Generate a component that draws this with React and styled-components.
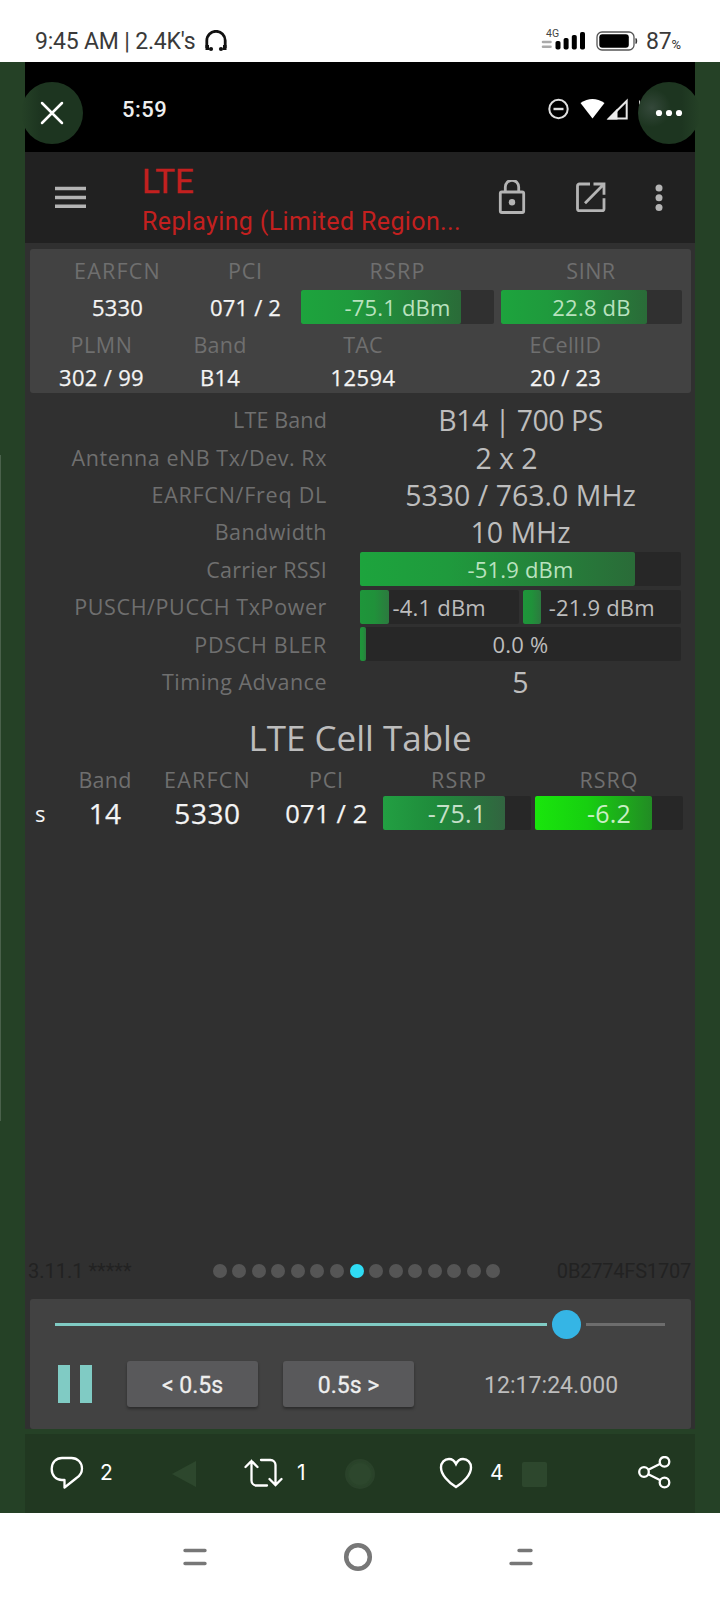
import React from "react";
import styled, { createGlobalStyle } from "styled-components";

const COLORS = {
  frame: "#254126",
  screen: "#303030",
  card: "#424242",
  toolbar: "#212121",
  label: "#6f6f6f",
  value: "#f4f4f4",
  soft: "#bdbdbd",
  icon: "#b4b4b4",
  red: "#c3201f",
  teal: "#80cbc4",
};

const FONTS = {
  ui: '"Roboto", sans-serif',
  data: '"Open Sans", "Noto Sans", sans-serif',
  social: '"Inter", sans-serif',
};

const GREEN = "linear-gradient(90deg, #1da43d 0%, #1f9a3d 32%, #2a6b38 100%)";
const DARK_GREEN = "linear-gradient(90deg, #229f42 0%, #1f8a3b 45%, #326440 100%)";
const BRIGHT = "linear-gradient(90deg, #19e60c 0%, #17cf10 45%, #228b24 100%)";
const SMALL = "linear-gradient(90deg, #1e963a 0%, #20913a 50%, #2c7a3f 100%)";

const DETAILS = [
  { label: "LTE Band", value: "B14 | 700 PS", labelSpacing: 0.15, spacing: -0.5 },
  { label: "Antenna eNB Tx/Dev. Rx", value: "2 x 2", labelSpacing: 0.55, shift: 28, spacing: -0.1 },
  { label: "EARFCN/Freq DL", value: "5330 / 763.0 MHz", labelSpacing: 0.75 },
  { label: "Bandwidth", value: "10 MHz", labelSpacing: 0.45 },
  {
    label: "Carrier RSSI",
    meters: [{ text: "-51.9 dBm", fill: 275, background: GREEN, color: "#b9e2bf" }],
  },
  {
    label: "PUSCH/PUCCH TxPower",
    labelSpacing: 0.6,
    meters: [
      { text: "-4.1 dBm", fill: 29, background: SMALL },
      { text: "-21.9 dBm", fill: 18, background: SMALL },
    ],
  },
  {
    label: "PDSCH BLER",
    labelSpacing: 0.7,
    meters: [{ text: "0.0 %", fill: 6, background: SMALL }],
  },
  { label: "Timing Advance", value: "5", labelSpacing: 0.5 },
];

const DOTS = Array.from({ length: 15 }, (_, index) => index);

function Meter({ text, fill, background, color, size, dark }) {
  return (
    <Track $dark={dark}>
      <Fill style={{ width: fill, background }} />
      <MeterText $color={color} $size={size}>
        {text}
      </MeterText>
    </Track>
  );
}

function PhoneStatus() {
  return (
    <StatusBar>
      <StatusText>9:45 AM | 2.4K's</StatusText>
      <svg width="22" height="22" viewBox="0 0 22 22">
        <path d="M1.800 18V10.500a9.200 9.200 0 0 1 18.400 0V18" fill="none" stroke="#111" strokeWidth="2.800" />
        <path d="M.5 15h3.500v5H.5zM18 15h3.500v5H18z" fill="#111" />
        <circle cx="6" cy="19" r="2.100" fill="#111" />
        <circle cx="16" cy="19" r="2.100" fill="#111" />
      </svg>
      <StatusRight>
        <Network>
          <NetworkName>4G</NetworkName>
          <svg width="11" height="10" viewBox="0 0 11 10">
            <path d="M2 3h7.500M2 7.700h7.500" stroke="#aaa" strokeWidth="2.600" strokeLinecap="round" />
          </svg>
        </Network>
        <svg width="31" height="20" viewBox="0 0 31 20">
          <rect x="0.500" y="10" width="5" height="8.500" rx="1.800" />
          <rect x="8.600" y="7" width="5" height="11.500" rx="1.800" />
          <rect x="16.800" y="4" width="5" height="14.500" rx="1.800" />
          <rect x="25" y="1" width="5" height="17.500" rx="1.800" />
        </svg>
        <BatterySvg width="42" height="20" viewBox="0 0 42 20">
          <rect x="1" y="1" width="37" height="18" rx="5" fill="none" stroke="#555" strokeWidth="1.300" />
          <rect x="3.300" y="3.300" width="29.500" height="13.400" rx="3" />
          <path d="M40 7.500q1.600 2.500 0 5z" stroke="#333" />
        </BatterySvg>
        <StatusText>87</StatusText>
        <Percent>%</Percent>
      </StatusRight>
    </StatusBar>
  );
}

function App() {
  return (
    <Page>
      <GlobalStyle />
      <PhoneStatus />
      <Stage>
        <EdgeLine />
        <CloseButton aria-label="Close">
          <svg width="24" height="24" viewBox="0 0 24 24">
            <path d="M2 2l20 20M22 2L2 22" stroke="#fff" strokeWidth="2.500" strokeLinecap="round" />
          </svg>
        </CloseButton>
        <MoreButton aria-label="More">
          <svg width="28" height="8" viewBox="0 0 28 8" fill="#fff">
            <circle cx="4" cy="4" r="3.100" />
            <circle cx="14" cy="4" r="3.100" />
            <circle cx="24" cy="4" r="3.100" />
          </svg>
        </MoreButton>

        <Screen>
          <InnerStatus>
            <InnerTime>5:59</InnerTime>
            <svg width="94" height="24" viewBox="0 0 94 24">
              <circle cx="11.500" cy="12" r="9.200" fill="none" stroke="#e0e0e0" strokeWidth="2" />
              <path d="M6.500 12h10" stroke="#e0e0e0" strokeWidth="2.400" />
              <path d="M33.500 6Q45.500-2 57.500 6L45.500 21.500z" fill="#fff" />
              <path d="M79.700 4v17.500H62z" fill="none" stroke="#e6e6e6" strokeWidth="2" />
              <path d="M60 22.500L70.500 11.500v11z" fill="#eee" />
              <path d="M92.500 3.500v4" stroke="#ccc" />
            </svg>
          </InnerStatus>

          <Toolbar>
            <svg width="32" height="24" viewBox="0 0 32 24">
              <path d="M0 2.500h31M0 11.500h31M0 20.300h31" stroke={COLORS.icon} strokeWidth="3.600" />
            </svg>
            <Titles>
              <Title>LTE</Title>
              <Subtitle>Replaying (Limited Region...</Subtitle>
            </Titles>
            <svg width="28" height="36" viewBox="0 0 28 36" fill="none" stroke={COLORS.icon}>
              <rect x="2.300" y="12" width="23.400" height="20.500" rx="1.500" strokeWidth="2.800" />
              <path d="M7.300 11.500V7a6.700 6.700 0 0 1 13.400 0v4.500" strokeWidth="2.800" />
              <circle cx="14" cy="22.300" r="3.200" fill={COLORS.icon} stroke="none" />
            </svg>
            <OpenSvg width="32" height="32" viewBox="0 0 32 32" fill="none" stroke={COLORS.icon} strokeWidth="2.800">
              <path d="M15 2H4.500a2 2 0 0 0-2 2v22.700a2 2 0 0 0 2 2H27a2 2 0 0 0 2-2V16.200" />
              <path d="M18.500 2H29v10.700M28.500 2.500L10 21.200" />
            </OpenSvg>
            <MoreSvg width="8" height="28" viewBox="0 0 8 28" fill={COLORS.icon}>
              <circle cx="4" cy="4" r="3.500" />
              <circle cx="4" cy="13.700" r="3.500" />
              <circle cx="4" cy="23.600" r="3.500" />
            </MoreSvg>
          </Toolbar>

          <Summary>
            <ServingRow>
              <Label $spacing={1.2}>EARFCN</Label>
              <Label $spacing={0.8}>PCI</Label>
              <Label $spacing={1.2}>RSRP</Label>
              <SinrLabel $spacing={0.5}>SINR</SinrLabel>
            </ServingRow>
            <ServingRow>
              <Value>5330</Value>
              <Value>071 / 2</Value>
              <Meter text="-75.1 dBm" fill={160} background={GREEN} color="#b9e2bf" dark />
              <MeterGap>
                <Meter text="22.8 dB" fill={146} background={GREEN} color="#b9e2bf" dark />
              </MeterGap>
            </ServingRow>
            <CellRow $height={33}>
              <Label $spacing={0.6}>PLMN</Label>
              <Label>Band</Label>
              <Label>TAC</Label>
              <Label>ECellID</Label>
            </CellRow>
            <CellRow $height={28}>
              <Value $spacing={0.3}>302 / 99</Value>
              <Value>B14</Value>
              <Value $spacing={0.4}>12594</Value>
              <Value>20 / 23</Value>
            </CellRow>
          </Summary>

          <Details>
            {DETAILS.map(({ label, value, labelSpacing, shift, spacing, meters }) => (
              <DetailRow key={label}>
                <DetailLabel $spacing={labelSpacing}>{label}</DetailLabel>
                {meters ? (
                  <Meters>
                    {meters.map((meter) => (
                      <Meter key={meter.text} {...meter} />
                    ))}
                  </Meters>
                ) : (
                  <DetailValue $shift={shift} $spacing={spacing}>
                    {value}
                  </DetailValue>
                )}
              </DetailRow>
            ))}
          </Details>

          <TableTitle>LTE Cell Table</TableTitle>
          <TableRow $height={33}>
            <span />
            <Label>Band</Label>
            <Label $spacing={1.2}>EARFCN</Label>
            <PciLabel $spacing={0.8}>PCI</PciLabel>
            <Label $spacing={1.2}>RSRP</Label>
            <Label $spacing={1}>RSRQ</Label>
          </TableRow>
          <TableRow $height={34}>
            <Serving>s</Serving>
            <TableValue>14</TableValue>
            <TableValue $spacing={0.6}>5330</TableValue>
            <PciValue>071 / 2</PciValue>
            <CellMeter>
              <Meter text="-75.1" fill={122} background={DARK_GREEN} color="#c6e0c9" size={25} />
            </CellMeter>
            <Meter text="-6.2" fill={117} background={BRIGHT} color="#c9efc4" size={25} />
          </TableRow>

          <Footer>
            <FooterText>3.11.1 *****</FooterText>
            <Dots>
              {DOTS.map((dot) => (
                <Dot key={dot} $active={dot === 7} />
              ))}
            </Dots>
            <FooterText>0B2774FS1707</FooterText>
          </Footer>

          <Player>
            <Slider>
              <Played />
              <Thumb />
              <Remaining />
            </Slider>
            <Controls>
              <PauseIcon>
                <PauseBar />
                <PauseBar />
              </PauseIcon>
              <StepButton>&lt; 0.5s</StepButton>
              <StepButton>0.5s &gt;</StepButton>
              <Clock>12:17:24.000</Clock>
            </Controls>
          </Player>

          <Actions>
            <Action $width={122}>
              <svg width="34" height="34" viewBox="0 0 34 34" fill="none" stroke="#fff" strokeWidth="2.300">
                <path
                  d="M12 2h9.500C27.500 2 32 6.500 32 12.500c0 4-2 7.300-5.500 9.500L14.500 31.500V24H12C6 24 1.700 19.500 1.700 13S6 2 12 2z"
                  strokeLinejoin="round"
                />
              </svg>
              <Count>2</Count>
            </Action>
            <Ghost $width={72}>
              <svg width="25" height="28" viewBox="0 0 25 28">
                <path d="M24 1v26L0 14z" fill="#2d472d" />
              </svg>
            </Ghost>
            <Action $width={100} $gap={14}>
              <svg width="39" height="30" viewBox="0 0 39 30" fill="none" stroke="#fff" strokeWidth="2.300">
                <path d="M1.500 9L7.500 3l6 6M7.500 3v19.500a5 5 0 0 0 5 5H23" strokeLinecap="round" />
                <path d="M37.500 21l-6 6-6-6M31.500 27V7a5 5 0 0 0-5-5H17" strokeLinecap="round" />
              </svg>
              <Count>1</Count>
            </Action>
            <Ghost $width={95}>
              <svg width="32" height="32" viewBox="0 0 32 32">
                <circle cx="16" cy="16" r="14" fill="#2a442a" stroke="#2a422a" strokeWidth="2" />
                <circle cx="16" cy="16" r="11" fill="#2d472d" />
              </svg>
            </Ghost>
            <Action $width={83} $gap={17}>
              <svg width="34" height="32" viewBox="0 0 34 32" fill="none" stroke="#fff" strokeWidth="2.400">
                <path d="M17 30C9 25 2 17.500 2 10.500 2 5.500 5.500 2 10 2c3 0 5.500 1.800 7 5 1.500-3.200 4-5 7-5 4.500 0 8 3.500 8 8.500C32 17.500 25 25 17 30z" />
              </svg>
              <Count>4</Count>
            </Action>
            <GhostSquare />
            <svg width="33" height="34" viewBox="0 0 33 34" fill="none" stroke="#fff" strokeWidth="2.300">
              <circle cx="6" cy="16" r="4.800" />
              <circle cx="26.500" cy="5.800" r="4.800" />
              <circle cx="26.500" cy="26.500" r="4.800" />
              <path d="M10.300 13.800l12-6M10.300 18.300l12 6" />
            </svg>
          </Actions>
        </Screen>
      </Stage>
      <NavBar>
        <svg width="24" height="18" viewBox="0 0 24 18" stroke="#777" strokeWidth="3.400" strokeLinecap="round">
          <path d="M2 2.500h20M2 15.500h20" />
        </svg>
        <svg width="30" height="30" viewBox="0 0 30 30" fill="none" stroke="#777" strokeWidth="4.500">
          <circle cx="15" cy="15" r="11.800" />
        </svg>
        <svg width="24" height="18" viewBox="0 0 24 18" stroke="#777" strokeWidth="3.400" strokeLinecap="round">
          <path d="M10 2.500h12M2 15.500h20" />
        </svg>
      </NavBar>
    </Page>
  );
}

const GlobalStyle = createGlobalStyle`
  * {
    box-sizing: border-box;
  }

  body {
    margin: 0;
    background: #fff;
  }

  svg {
    display: block;
    flex-shrink: 0;
  }
`;

const Page = styled.div`
  display: flex;
  flex-direction: column;
  width: 720px;
  height: 1600px;
  overflow: hidden;
  background: #fff;
  white-space: nowrap;
  font-family: ${FONTS.ui};
`;

const StatusBar = styled.header`
  display: flex;
  align-items: center;
  height: 62px;
  padding: 20px 39px 0 35px;

  > svg {
    margin-left: 10px;
  }
`;

const StatusText = styled.span`
  color: #3a3a3a;
  font-size: 23px;
  letter-spacing: -0.2px;
`;

const StatusRight = styled.div`
  display: flex;
  align-items: center;
  margin-left: auto;
`;

const Network = styled.div`
  display: flex;
  flex-direction: column;
  width: 14px;
  height: 20px;
  margin-top: -4px;
`;

const NetworkName = styled.span`
  padding-left: 5px;
  color: #444;
  font-size: 10.5px;
  line-height: 10px;
`;

const BatterySvg = styled.svg`
  margin: 0 8px 0 10px;
`;

const Percent = styled.span`
  padding-top: 6px;
  color: #333;
  font-size: 13px;
`;

const Stage = styled.main`
  position: relative;
  height: 1451px;
  padding: 0 25px;
  background: ${COLORS.frame};
`;

const EdgeLine = styled.div`
  position: absolute;
  top: 393px;
  left: 0;
  width: 1px;
  height: 666px;
  background: #4a614b;
`;

const RoundButton = styled.button`
  position: absolute;
  top: 20px;
  display: flex;
  justify-content: center;
  align-items: center;
  width: 62px;
  height: 62px;
  padding: 0;
  border: none;
  border-radius: 50%;
`;

const CloseButton = styled(RoundButton)`
  left: 20.5px;
  background: linear-gradient(90deg, #254126 0%, #233e25 8%, #1d3520 30%);
`;

const MoreButton = styled(RoundButton)`
  left: 638px;
  background:
    radial-gradient(circle at 22% 42%, #34483a 0%, rgba(29, 53, 32, 0) 32%),
    linear-gradient(270deg, #254126 0%, #233e25 8%, #1d3520 30%);
`;

const Screen = styled.div`
  display: flex;
  flex-direction: column;
  height: 100%;
  background: ${COLORS.screen};
`;

const InnerStatus = styled.div`
  display: flex;
  justify-content: space-between;
  align-items: center;
  height: 90px;
  padding: 4px 54px 0 97px;
  background: #000;
`;

const InnerTime = styled.span`
  color: #eee;
  font-size: 22px;
  font-weight: 500;
  letter-spacing: 0.5px;
`;

const Toolbar = styled.div`
  display: flex;
  align-items: center;
  height: 91px;
  padding: 0 32px 0 30px;
  background: ${COLORS.toolbar};
`;

const Titles = styled.div`
  width: 411px;
  padding: 8px 0 0 55px;
  color: ${COLORS.red};
`;

const Title = styled.h1`
  margin: 0;
  font-size: 33px;
  font-weight: 400;
  line-height: 40px;
  -webkit-text-stroke: 0.4px ${COLORS.red};
`;

const Subtitle = styled.div`
  font-size: 25px;
  line-height: 40px;
  letter-spacing: 0.37px;
`;

const OpenSvg = styled.svg`
  margin-left: 49px;
`;

const MoreSvg = styled.svg`
  margin-left: auto;
`;

const Summary = styled.section`
  height: 144px;
  margin: 6px 4px 0 5px;
  border-radius: 3px;
  background: ${COLORS.card};
`;

const ServingRow = styled.div`
  display: grid;
  grid-template-columns: 145px 111px 193px 188px;
  align-items: center;
  height: 34px;
  margin-left: 15px;

  &:first-child {
    height: 41px;
    padding-top: 2px;
  }
`;

const CellRow = styled.div`
  display: grid;
  grid-template-columns: 117px 120px 166px 239px;
  align-items: center;
  height: ${({ $height }) => $height}px;
  margin: 4px 0 -3px 13px;
`;

const Label = styled.span`
  color: ${COLORS.label};
  font-family: ${FONTS.data};
  font-size: 21.5px;
  font-weight: 400;
  line-height: 30px;
  letter-spacing: ${({ $spacing = 0.25 }) => $spacing}px;
  text-align: center;
`;

const SinrLabel = styled(Label)`
  padding-left: 6px;
`;

const Value = styled.span`
  color: ${COLORS.value};
  font-family: ${FONTS.data};
  font-size: 22px;
  line-height: 30px;
  letter-spacing: ${({ $spacing = 0.2 }) => $spacing}px;
  text-align: center;
  -webkit-text-stroke: 0.25px ${COLORS.value};
`;

const Track = styled.div`
  position: relative;
  flex: 1;
  height: 34px;
  border-radius: 2px;
  background: ${({ $dark }) => ($dark ? "#303030" : "#272727")};
`;

const MeterGap = styled.div`
  display: flex;
  padding-left: 7px;
`;

const CellMeter = styled.div`
  display: flex;
  padding-right: 4px;
`;

const Fill = styled.div`
  height: 34px;
  border-radius: 2px;
`;

const MeterText = styled.span`
  position: absolute;
  inset: 0;
  color: ${({ $color = COLORS.soft }) => $color};
  font-family: ${FONTS.data};
  font-size: ${({ $size = 22 }) => $size}px;
  line-height: 35px;
  letter-spacing: 0.2px;
  text-align: center;
`;

const Details = styled.section`
  margin-top: 8px;
`;

const DetailRow = styled.div`
  display: grid;
  grid-template-columns: 302px 321px;
  column-gap: 33px;
  align-items: center;
  height: 37.4px;
`;

const DetailLabel = styled(Label)`
  padding-top: 1px;
  text-align: right;
`;

const DetailValue = styled.span`
  padding: 1px ${({ $shift = 0 }) => $shift}px 0 0;
  color: ${COLORS.soft};
  font-family: ${FONTS.data};
  font-size: 28.5px;
  line-height: 36px;
  letter-spacing: ${({ $spacing = 0 }) => $spacing}px;
  text-align: center;
`;

const Meters = styled.div`
  display: flex;
  gap: 4px;
`;

const TableTitle = styled.h2`
  margin: 13px 0 0;
  color: ${COLORS.soft};
  font-family: ${FONTS.data};
  font-size: 35px;
  font-weight: 400;
  line-height: 50px;
  text-align: center;
`;

const TableRow = styled.div`
  display: grid;
  grid-template-columns: 30px 100px 105px 123px 152px 148px;
  align-items: center;
  height: ${({ $height }) => $height}px;
`;

const Serving = styled.span`
  padding-left: 10px;
  color: ${COLORS.value};
  font-family: ${FONTS.data};
  font-size: 22px;
`;

const TableValue = styled(Value)`
  font-size: 28px;
`;

const PciLabel = styled(Label)`
  padding-left: 10px;
`;

const PciValue = styled(Value)`
  padding-left: 10px;
  font-size: 25.5px;
`;

const Footer = styled.div`
  display: flex;
  justify-content: space-between;
  align-items: center;
  height: 30px;
  margin-top: auto;
  padding: 0 4px 0 3px;
`;

const FooterText = styled.span`
  width: 150px;
  color: #222;
  font-size: 20px;

  &:last-child {
    text-align: right;
    letter-spacing: -0.2px;
  }
`;

const Dots = styled.div`
  display: flex;
  gap: 5.57px;
  margin-right: 6px;
`;

const Dot = styled.span`
  width: 14px;
  height: 14px;
  border-radius: 50%;
  background: ${({ $active }) => ($active ? "#2fdcf4" : "#555")};
`;

const Player = styled.section`
  height: 130px;
  margin: 13px 4px 0 5px;
  border-radius: 3px;
  background: ${COLORS.card};
`;

const Slider = styled.div`
  display: flex;
  align-items: center;
  height: 51px;
  padding: 0 26px 0 25px;
`;

const Played = styled.div`
  width: 492px;
  height: 3px;
  background: ${COLORS.teal};
`;

const Thumb = styled.div`
  width: 29px;
  height: 29px;
  margin: 0 5px;
  border-radius: 50%;
  background: #35b5e5;
`;

const Remaining = styled.div`
  flex: 1;
  height: 3px;
  background: #6d6d6d;
`;

const Controls = styled.div`
  display: flex;
  align-items: center;
  padding: 11px 0 0 28px;
`;

const PauseIcon = styled.div`
  display: flex;
  gap: 10px;
  width: 69px;
`;

const PauseBar = styled.span`
  width: 12px;
  height: 38px;
  background: ${COLORS.teal};
`;

const StepButton = styled.button`
  width: 131px;
  height: 46px;
  margin-right: 25px;
  padding: 2px 0 0;
  border: none;
  border-radius: 3px;
  background: #59595b;
  box-shadow: 0 2px 3px rgba(0, 0, 0, 0.35);
  color: #eee;
  font-family: ${FONTS.ui};
  font-size: 23px;
  font-weight: 400;
  -webkit-text-stroke: 0.3px #eee;
`;

const Clock = styled.span`
  padding: 2px 0 0 45px;
  color: ${COLORS.soft};
  font-size: 23px;
  letter-spacing: 0.05px;
`;

const Actions = styled.footer`
  display: flex;
  align-items: center;
  height: 84px;
  padding: 0 24px 2px 25px;
  border-top: 5px solid ${COLORS.frame};
  background: #213821;
`;

const Action = styled.div`
  display: flex;
  align-items: center;
  gap: ${({ $gap = 16 }) => $gap}px;
  width: ${({ $width }) => $width}px;
`;

const Count = styled.span`
  color: #fff;
  font-family: ${FONTS.social};
  font-size: 21px;
`;

const Ghost = styled.div`
  width: ${({ $width }) => $width}px;
  padding-top: 3px;
`;

const GhostSquare = styled.span`
  width: 25px;
  height: 25px;
  margin: 4px auto 0 0;
  border-radius: 2px;
  background: #2d472d;
`;

const NavBar = styled.nav`
  display: flex;
  justify-content: space-between;
  align-items: center;
  height: 87px;
  padding: 0 187px 0 183px;
`;

export default App;
